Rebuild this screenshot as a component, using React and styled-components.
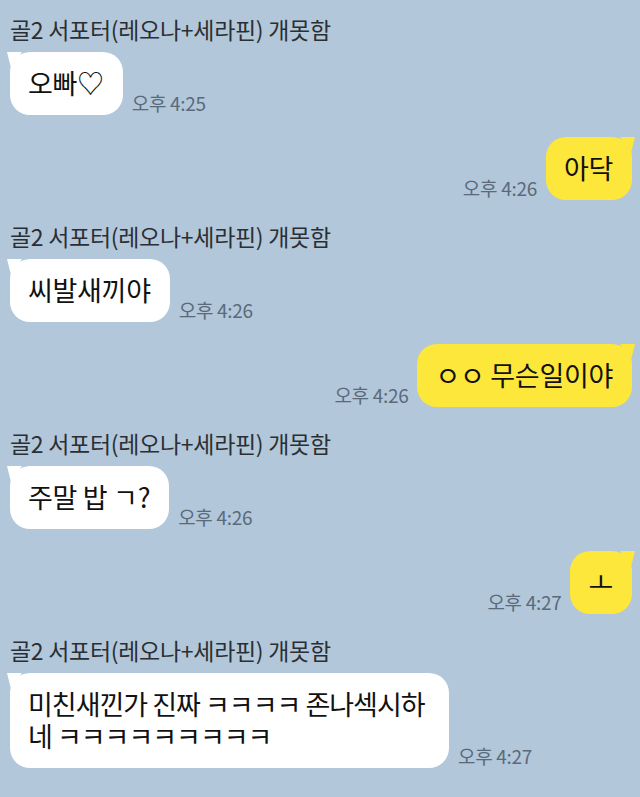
import React from 'react';
import styled, { createGlobalStyle } from 'styled-components';

const GlobalStyle = createGlobalStyle`
    html, body {
        margin: 0;
        padding: 0;
        background: #b2c7da;
    }
    body {
        font-family: 'Noto Sans CJK KR', 'Noto Sans', sans-serif;
    }
`;

const Chat = styled.div`
    width: 640px;
    min-height: 797px;
    box-sizing: border-box;
    padding: 17px 8px 0 10px;
    display: flex;
    flex-direction: column;
    gap: 22px;
    background: #b2c7da;
`;

const Group = styled.div`
    display: flex;
    flex-direction: column;
    gap: 11px;
    margin-top: ${(p) => (p.$first ? '0' : '2px')};
`;

const Name = styled.div`
    font-size: 23px;
    line-height: 24px;
    color: #2b2f33;
    letter-spacing: -0.3px;
`;

const Row = styled.div`
    display: flex;
    align-items: flex-end;
    justify-content: ${(p) => (p.$mine ? 'flex-end' : 'flex-start')};
    gap: 9px;
`;

const Bubble = styled.div`
    position: relative;
    background: ${(p) => (p.$mine ? '#fde73a' : '#ffffff')};
    color: #111;
    font-size: 27px;
    line-height: 32px;
    padding: 15px 19px 16px 18px;
    border-radius: 20px;
    max-width: ${(p) => p.$max || 'none'};
    word-break: break-all;
    letter-spacing: ${(p) => (p.$tight ? '-1px' : '-0.3px')};

    &::before {
        content: '';
        position: absolute;
        top: 0;
        width: 15px;
        height: 15px;
        background: inherit;
        ${(p) =>
            p.$mine
                ? 'right: -3px; clip-path: polygon(0 0, 100% 0, 75% 100%);'
                : 'left: -3px; clip-path: polygon(0 0, 100% 0, 25% 100%);'}
    }
`;

const Time = styled.span`
    font-size: 19px;
    line-height: 20px;
    color: #5a6a7b;
    padding-bottom: 2px;
    white-space: nowrap;
    letter-spacing: -0.3px;
`;

const NAME = '골2 서포터(레오나+세라핀) 개못함';

const messages = [
    { mine: false, name: true, text: '오빠♡', time: '오후 4:25' },
    { mine: true, text: '아닥', time: '오후 4:26' },
    { mine: false, name: true, text: '씨발새끼야', time: '오후 4:26' },
    { mine: true, text: 'ㅇㅇ 무슨일이야', time: '오후 4:26' },
    { mine: false, name: true, text: '주말 밥 ㄱ?', time: '오후 4:26' },
    { mine: true, text: 'ㅗ', time: '오후 4:27' },
    {
        mine: false,
        name: true,
        text: '미친새낀가 진짜 ㅋㅋㅋㅋ 존나섹시하네 ㅋㅋㅋㅋㅋㅋㅋㅋㅋ',
        time: '오후 4:27',
        max: '402px',
        tight: true,
    },
];

const Message = ({ msg }) => (
    <Row $mine={msg.mine}>
        {msg.mine && <Time>{msg.time}</Time>}
        <Bubble $mine={msg.mine} $max={msg.max} $tight={msg.tight}>
            {msg.text}
        </Bubble>
        {!msg.mine && <Time>{msg.time}</Time>}
    </Row>
);

export default function App() {
    return (
        <>
            <GlobalStyle />
            <Chat>
                {messages.map((msg, i) =>
                    msg.name ? (
                        <Group key={i} $first={i === 0}>
                            <Name>{NAME}</Name>
                            <Message msg={msg} />
                        </Group>
                    ) : (
                        <Message key={i} msg={msg} />
                    )
                )}
            </Chat>
        </>
    );
}
